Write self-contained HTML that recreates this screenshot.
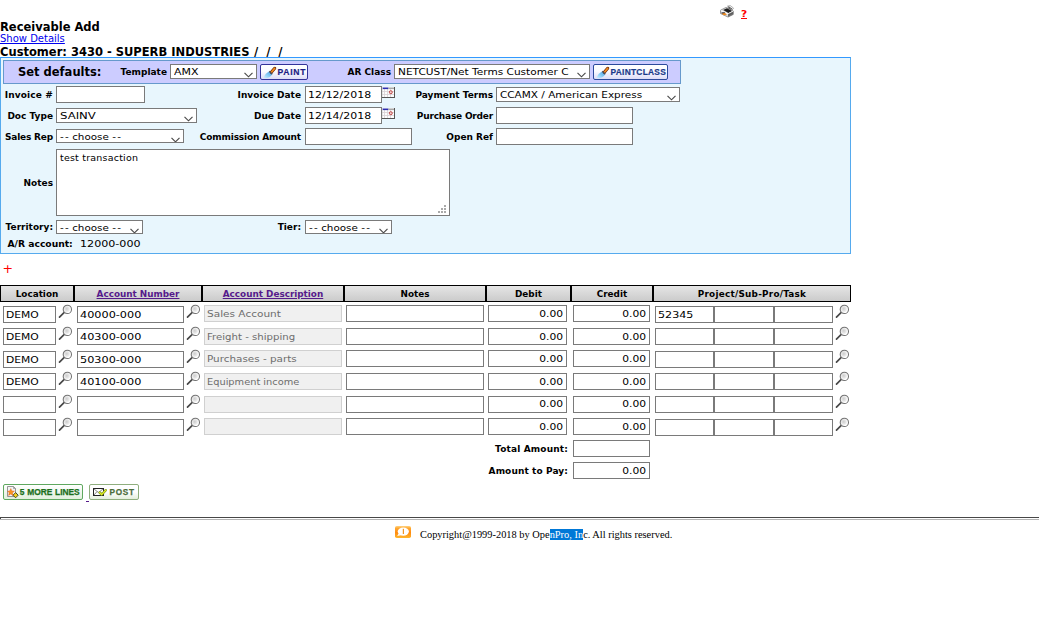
<!DOCTYPE html>
<html><head><meta charset="utf-8"><title>Receivable Add</title>
<style>
html,body{margin:0;padding:0;background:#fff;}
body{width:1039px;height:621px;position:relative;overflow:hidden;font-family:"DejaVu Sans","Liberation Sans",sans-serif;font-size:10px;color:#000;}
.a{position:absolute;white-space:nowrap;line-height:1;}
.b{font-weight:bold;}
.in{position:absolute;box-sizing:border-box;border:1px solid #7a7a7a;background:#fff;height:17px;font-size:9px;line-height:15px;padding:0 2px;white-space:nowrap;overflow:hidden;}
.sel{position:absolute;box-sizing:border-box;border:1px solid #7a7a7a;background:#fff;height:15px;font-size:9px;line-height:13px;padding:0 3px;white-space:nowrap;overflow:hidden;}
.sel svg{position:absolute;right:3px;bottom:0px;}
.t{display:inline-block;position:relative;top:.7px;transform:scaleX(1.18);transform-origin:0 50%;}
.t.d{transform:scaleX(1.24);}
.r .t{transform-origin:100% 50%;}
.ro{background:#f0f0f0;border-color:#d0d0d0;color:#6d6d6d;}
.r{text-align:right;padding-right:3px;}
.th{position:absolute;box-sizing:border-box;border:1px solid #000;height:17px;top:285px;background:linear-gradient(#e5e5e5,#cbcbcb);text-align:center;font-weight:bold;font-size:8.85px;line-height:16px;}
.th span{color:#551a8b;text-decoration:underline;}
.lbl{position:absolute;white-space:nowrap;font-weight:bold;font-size:9px;line-height:12px;text-align:right;}
.btn{position:absolute;white-space:nowrap;box-sizing:border-box;height:16px;border:1px solid #333399;border-radius:2px;background:linear-gradient(#fff,#fbfbff 45%,#dcdcf6);-webkit-text-stroke:.2px;font-family:"Liberation Sans",sans-serif;font-weight:bold;font-size:9px;line-height:14px;color:#1c1c84;}
.gbtn{position:absolute;white-space:nowrap;-webkit-text-stroke:.25px;box-sizing:border-box;height:17px;border:1px solid #8fbf7f;border-radius:2px;background:linear-gradient(#fff,#e2f0dc);font-family:"Liberation Sans",sans-serif;font-weight:bold;font-size:9px;line-height:15px;color:#1a6e1a;}
.mag{position:absolute;}
</style></head><body>
<svg width="0" height="0" style="position:absolute"><defs><radialGradient id="mg" cx="42%" cy="42%" r="60%"><stop offset="0" stop-color="#cdcdcd"/><stop offset="0.45" stop-color="#e6e6e6"/><stop offset="0.8" stop-color="#ffffff"/></radialGradient></defs></svg>

<div class="a b" style="left:741px;top:9.6px;font-size:9px;color:#f00;"><span style="display:inline-block;transform:scaleX(1.18);transform-origin:0 0;">?</span></div><div class="a" style="left:741px;top:18px;width:6px;height:1px;background:#f00;"></div>
<div class="a b" style="left:0;top:22px;font-size:11.5px;">Receivable Add</div>
<div class="a" style="left:0;top:34px;font-size:10px;color:#0000ee;text-decoration:underline;">Show Details</div>
<div class="a b" style="left:0;top:46.5px;font-size:11.5px;">Customer: 3430 - SUPERB INDUSTRIES<span style="letter-spacing:2px;margin-left:-1.5px;"> / / /</span></div>
<svg class="mag" style="left:719.3px;top:4.6px;" width="16" height="13" viewBox="0 0 17 14"><path d="M9 1.2 L12 0.6 L15.6 3.4 L13.4 5.6 Z" fill="#f4f4f4" stroke="#777" stroke-width="0.6"/><path d="M10.2 1.8 L14.2 4.6 M9.4 2.8 L13 5.2" stroke="#222" stroke-width="0.9"/><path d="M1.5 5.6 L7.5 2.6 L15.2 6.4 L15.2 10.2 L9.6 13 L1.5 9.2 Z" fill="#dcdcdc" stroke="#6a6a6a" stroke-width="0.7"/><path d="M4.4 5.4 L8.4 3.4 L14 6.4 L10 8.6 Z" fill="#1c1c1c"/><path d="M1.8 6 L9.6 9.6 L15 6.8" fill="none" stroke="#fff" stroke-width="1"/><path d="M9.6 9.8 L15.2 7 L15.2 10.2 L9.6 13 Z" fill="#6e6e6e"/><path d="M9.8 11 L15 8.4" stroke="#555" stroke-width="0.8"/><path d="M2.6 9 L6.2 8.4 L8.4 10.6 L4.8 11 Z" fill="#f08a1c"/><path d="M2.4 8.2 L5.8 7.8 L6.6 8.6 L2.8 9.2 Z" fill="#223"/></svg>
<div class="a" style="left:0;top:57px;width:851px;height:197px;box-sizing:border-box;border:1px solid #55aaee;border-top-color:#3399ff;background:#e8f6fd;"></div>
<div class="a" style="left:3px;top:60px;width:678px;height:24px;box-sizing:border-box;border:1px solid #6699cc;background:#ccccff;"></div>
<div class="a b" style="left:18px;top:67px;font-size:11.5px;">Set defaults:</div>
<div class="lbl" style="left:27px;width:140px;top:66px;">Template</div>
<div class="sel" style="left:170px;top:64px;width:87px;height:15px;"><span class="t" style="transform:scaleX(1.218)">AMX</span><svg width="9" height="6" viewBox="0 0 9 6"><path d="M0.5 0.8 L4.5 4.8 L8.5 0.8" fill="none" stroke="#484848" stroke-width="1.15"/></svg></div>
<div class="btn" style="left:260px;top:64px;width:48px;"><span style="position:absolute;left:16.4px;font-size:8.6px;letter-spacing:0.75px;">PAINT</span></div>
<svg class="mag" style="left:262.5px;top:65.5px;" width="15" height="14" viewBox="0 0 15 14"><defs><linearGradient id="bg262" x1="1" y1="0" x2="0" y2="1"><stop offset="0" stop-color="#3f9fe6"/><stop offset="0.55" stop-color="#8ccdf4"/><stop offset="1" stop-color="#d4f0fd"/></linearGradient></defs><path d="M0.6 12.1 C1.4 9 3.4 6.8 6.1 5.5 L9.1 8.5 C7.8 11 4.6 12.4 0.6 12.1 Z" fill="url(#bg262)"/><path d="M8.3 6.3 L11.7 2.3" stroke="#6e2c12" stroke-width="3.1" stroke-linecap="round"/><path d="M8.4 6.2 L11.6 2.4" stroke="#f58a1c" stroke-width="1.7" stroke-linecap="round"/><path d="M6.3 5.3 L9.3 8.3" stroke="#4a4a55" stroke-width="1.3"/></svg>
<div class="lbl" style="left:251px;width:140px;top:66px;">AR Class</div>
<div class="sel" style="left:394px;top:64px;width:196px;height:15px;"><span class="t" style="transform:scaleX(1.173)">NETCUST/Net Terms Customer C</span><svg width="9" height="6" viewBox="0 0 9 6"><path d="M0.5 0.8 L4.5 4.8 L8.5 0.8" fill="none" stroke="#484848" stroke-width="1.15"/></svg></div>
<div class="btn" style="left:593px;top:64px;width:75px;border-color:#2c4a9c;color:#1a3a8a;"><span style="position:absolute;left:16.6px;font-size:8.4px;letter-spacing:0.25px;">PAINTCLASS</span></div>
<svg class="mag" style="left:595.5px;top:65.5px;" width="15" height="14" viewBox="0 0 15 14"><defs><linearGradient id="bg595" x1="1" y1="0" x2="0" y2="1"><stop offset="0" stop-color="#3f9fe6"/><stop offset="0.55" stop-color="#8ccdf4"/><stop offset="1" stop-color="#d4f0fd"/></linearGradient></defs><path d="M0.6 12.1 C1.4 9 3.4 6.8 6.1 5.5 L9.1 8.5 C7.8 11 4.6 12.4 0.6 12.1 Z" fill="url(#bg595)"/><path d="M8.3 6.3 L11.7 2.3" stroke="#6e2c12" stroke-width="3.1" stroke-linecap="round"/><path d="M8.4 6.2 L11.6 2.4" stroke="#f58a1c" stroke-width="1.7" stroke-linecap="round"/><path d="M6.3 5.3 L9.3 8.3" stroke="#4a4a55" stroke-width="1.3"/></svg>
<div class="lbl" style="left:-87px;width:140px;top:88.8px;"><span style="letter-spacing:.15px">Invoice #</span></div>
<div class="in " style="left:56px;top:86px;width:89px;height:17px;"></div>
<div class="lbl" style="left:161px;width:140px;top:88.8px;">Invoice Date</div>
<div class="in " style="left:305px;top:86px;width:77px;height:17px;"><span class="t" style="transform:scaleX(1.218)">12/12/2018</span></div>
<svg class="mag" style="left:382px;top:87px;" width="13" height="11" viewBox="0 0 13 11"><rect x="0" y="0" width="13" height="11" fill="#fdfdfd"/><path d="M2.5 2 V10 M5.5 2 V10 M8.5 2 V10 M0 4.5 H12 M0 7.5 H12" stroke="#d8d0d4" stroke-width="0.8"/><rect x="0.5" y="0.5" width="6" height="1.6" fill="#2c2cb0"/><rect x="6.5" y="0.5" width="6" height="1.6" fill="#a8a8a8"/><circle cx="8.8" cy="5.2" r="1.5" fill="#f0d0d0" stroke="#c04848" stroke-width="1"/><path d="M12.5 0 V11 M0 10.5 H13" stroke="#555" stroke-width="1"/><path d="M0.3 0 V10" stroke="#ccc" stroke-width="0.6"/></svg>
<div class="lbl" style="left:353px;width:140px;top:88.8px;">Payment Terms</div>
<div class="sel" style="left:496px;top:87px;width:184px;height:15px;"><span class="t" style="transform:scaleX(1.163)">CCAMX / American Express</span><svg width="9" height="6" viewBox="0 0 9 6"><path d="M0.5 0.8 L4.5 4.8 L8.5 0.8" fill="none" stroke="#484848" stroke-width="1.15"/></svg></div>
<div class="lbl" style="left:-87px;width:140px;top:109.8px;">Doc Type</div>
<div class="sel" style="left:56px;top:108px;width:141px;height:15px;"><span class="t" style="transform:scaleX(1.3)">SAINV</span><svg width="9" height="6" viewBox="0 0 9 6"><path d="M0.5 0.8 L4.5 4.8 L8.5 0.8" fill="none" stroke="#484848" stroke-width="1.15"/></svg></div>
<div class="lbl" style="left:161px;width:140px;top:109.8px;">Due Date</div>
<div class="in " style="left:305px;top:107px;width:77px;height:17px;"><span class="t" style="transform:scaleX(1.218)">12/14/2018</span></div>
<svg class="mag" style="left:382px;top:108px;" width="13" height="11" viewBox="0 0 13 11"><rect x="0" y="0" width="13" height="11" fill="#fdfdfd"/><path d="M2.5 2 V10 M5.5 2 V10 M8.5 2 V10 M0 4.5 H12 M0 7.5 H12" stroke="#d8d0d4" stroke-width="0.8"/><rect x="0.5" y="0.5" width="6" height="1.6" fill="#2c2cb0"/><rect x="6.5" y="0.5" width="6" height="1.6" fill="#a8a8a8"/><circle cx="8.8" cy="5.2" r="1.5" fill="#f0d0d0" stroke="#c04848" stroke-width="1"/><path d="M12.5 0 V11 M0 10.5 H13" stroke="#555" stroke-width="1"/><path d="M0.3 0 V10" stroke="#ccc" stroke-width="0.6"/></svg>
<div class="lbl" style="left:353px;width:140px;top:109.8px;"><span style="letter-spacing:-.2px">Purchase Order</span></div>
<div class="in " style="left:496px;top:107px;width:137px;height:17px;"></div>
<div class="lbl" style="left:-87px;width:140px;top:130.8px;"><span style="letter-spacing:-.2px">Sales Rep</span></div>
<div class="sel" style="left:56px;top:129px;width:128px;height:14px;line-height:12px;"><span class="t" style="transform:scaleX(1.15)"><span style="letter-spacing:1.2px">-</span>- choose <span style="letter-spacing:1.2px">-</span>-</span><svg style="bottom:-1px" width="9" height="6" viewBox="0 0 9 6"><path d="M0.5 0.8 L4.5 4.8 L8.5 0.8" fill="none" stroke="#484848" stroke-width="1.15"/></svg></div>
<div class="lbl" style="left:161px;width:140px;top:130.8px;"><span style="letter-spacing:-.15px">Commission Amount</span></div>
<div class="in " style="left:305px;top:128px;width:107px;height:17px;"></div>
<div class="lbl" style="left:353px;width:140px;top:130.8px;">Open Ref</div>
<div class="in " style="left:496px;top:128px;width:137px;height:17px;"></div>
<div class="lbl" style="left:-87px;width:140px;top:176.8px;">Notes</div>
<div class="in" style="left:56px;top:149px;width:394px;height:67px;font-size:9.5px;letter-spacing:.2px;line-height:12px;padding:2px 3px;">test transaction</div>
<svg class="mag" style="left:438px;top:205px;" width="8" height="8" viewBox="0 0 8 8" shape-rendering="crispEdges"><g fill="#aaaaaa"><rect x="6" y="0" width="2" height="2"/><rect x="3" y="3" width="2" height="2"/><rect x="6" y="3" width="2" height="2"/><rect x="0" y="6" width="2" height="2"/><rect x="3" y="6" width="2" height="2"/><rect x="6" y="6" width="2" height="2"/></g></svg>
<div class="lbl" style="left:-87px;width:140px;top:221px;">Territory:</div>
<div class="sel" style="left:56px;top:220px;width:87px;height:14px;line-height:12px;"><span class="t" style="transform:scaleX(1.15)"><span style="letter-spacing:1.2px">-</span>- choose <span style="letter-spacing:1.2px">-</span>-</span><svg style="bottom:-1px" width="9" height="6" viewBox="0 0 9 6"><path d="M0.5 0.8 L4.5 4.8 L8.5 0.8" fill="none" stroke="#484848" stroke-width="1.15"/></svg></div>
<div class="lbl" style="left:161px;width:140px;top:221px;">Tier:</div>
<div class="sel" style="left:305px;top:220px;width:87px;height:14px;line-height:12px;"><span class="t" style="transform:scaleX(1.15)"><span style="letter-spacing:1.2px">-</span>- choose <span style="letter-spacing:1.2px">-</span>-</span><svg style="bottom:-1px" width="9" height="6" viewBox="0 0 9 6"><path d="M0.5 0.8 L4.5 4.8 L8.5 0.8" fill="none" stroke="#484848" stroke-width="1.15"/></svg></div>
<div class="a b" style="left:7.5px;top:238.6px;font-size:9.2px;">A/R account:</div>
<div class="a" style="left:80px;top:239.7px;font-size:9px;"><span class="t" style="top:0;transform:scaleX(1.235)">12000-000</span></div>
<div class="a" style="left:2.5px;top:262.6px;font-size:12.5px;color:#f00;">+</div>
<div class="th" style="left:0px;width:74px;">Location</div>
<div class="th" style="left:74px;width:128px;"><span>Account Number</span></div>
<div class="th" style="left:202px;width:142px;"><span>Account Description</span></div>
<div class="th" style="left:344px;width:142px;">Notes</div>
<div class="th" style="left:486px;width:85px;">Debit</div>
<div class="th" style="left:571px;width:82px;">Credit</div>
<div class="th" style="left:653px;width:198px;"><b style="letter-spacing:.25px">Project/Sub-Pro/Task</b></div>
<div class="in " style="left:3px;top:306px;width:53px;height:17px;"><span class="t" style="transform:scaleX(1.19)">DEMO</span></div>
<svg class="mag" style="left:56px;top:302px;" width="20" height="20" viewBox="0 0 20 20"><line x1="3.5" y1="15.1" x2="8.3" y2="10.3" stroke="#484848" stroke-width="1.7" stroke-linecap="round"/><circle cx="11.35" cy="7.4" r="4.15" fill="url(#mg)" stroke="#727272" stroke-width="1.05"/></svg>
<div class="in " style="left:77px;top:306px;width:107px;height:17px;"><span class="t" style="transform:scaleX(1.25)">40000-000</span></div>
<svg class="mag" style="left:184px;top:302px;" width="20" height="20" viewBox="0 0 20 20"><line x1="3.5" y1="15.1" x2="8.3" y2="10.3" stroke="#484848" stroke-width="1.7" stroke-linecap="round"/><circle cx="11.35" cy="7.4" r="4.15" fill="url(#mg)" stroke="#727272" stroke-width="1.05"/></svg>
<div class="in ro" style="left:204px;top:305px;width:138px;height:17px;"><span class="t" style="transform:scaleX(1.17)">Sales Account</span></div>
<div class="in " style="left:346px;top:305px;width:138px;height:17px;"></div>
<div class="in r" style="left:488px;top:305px;width:79px;height:17px;"><span class="t" style="transform:scaleX(1.19)">0.00</span></div>
<div class="in r" style="left:573px;top:305px;width:77px;height:17px;"><span class="t" style="transform:scaleX(1.19)">0.00</span></div>
<div class="in " style="left:655px;top:306px;width:59px;height:17px;"><span class="t" style="transform:scaleX(1.235)">52345</span></div>
<div class="in " style="left:714px;top:306px;width:60px;height:17px;"></div>
<div class="in " style="left:774px;top:306px;width:59px;height:17px;"></div>
<svg class="mag" style="left:833px;top:302px;" width="20" height="20" viewBox="0 0 20 20"><line x1="3.5" y1="15.1" x2="8.3" y2="10.3" stroke="#484848" stroke-width="1.7" stroke-linecap="round"/><circle cx="11.35" cy="7.4" r="4.15" fill="url(#mg)" stroke="#727272" stroke-width="1.05"/></svg>
<div class="in " style="left:3px;top:328px;width:53px;height:17px;"><span class="t" style="transform:scaleX(1.19)">DEMO</span></div>
<svg class="mag" style="left:56px;top:324px;" width="20" height="20" viewBox="0 0 20 20"><line x1="3.5" y1="15.1" x2="8.3" y2="10.3" stroke="#484848" stroke-width="1.7" stroke-linecap="round"/><circle cx="11.35" cy="7.4" r="4.15" fill="url(#mg)" stroke="#727272" stroke-width="1.05"/></svg>
<div class="in " style="left:77px;top:328px;width:107px;height:17px;"><span class="t" style="transform:scaleX(1.25)">40300-000</span></div>
<svg class="mag" style="left:184px;top:324px;" width="20" height="20" viewBox="0 0 20 20"><line x1="3.5" y1="15.1" x2="8.3" y2="10.3" stroke="#484848" stroke-width="1.7" stroke-linecap="round"/><circle cx="11.35" cy="7.4" r="4.15" fill="url(#mg)" stroke="#727272" stroke-width="1.05"/></svg>
<div class="in ro" style="left:204px;top:328px;width:138px;height:17px;"><span class="t" style="transform:scaleX(1.127)">Freight - shipping</span></div>
<div class="in " style="left:346px;top:328px;width:138px;height:17px;"></div>
<div class="in r" style="left:488px;top:328px;width:79px;height:17px;"><span class="t" style="transform:scaleX(1.19)">0.00</span></div>
<div class="in r" style="left:573px;top:328px;width:77px;height:17px;"><span class="t" style="transform:scaleX(1.19)">0.00</span></div>
<div class="in " style="left:655px;top:328px;width:59px;height:17px;"></div>
<div class="in " style="left:714px;top:328px;width:60px;height:17px;"></div>
<div class="in " style="left:774px;top:328px;width:59px;height:17px;"></div>
<svg class="mag" style="left:833px;top:324px;" width="20" height="20" viewBox="0 0 20 20"><line x1="3.5" y1="15.1" x2="8.3" y2="10.3" stroke="#484848" stroke-width="1.7" stroke-linecap="round"/><circle cx="11.35" cy="7.4" r="4.15" fill="url(#mg)" stroke="#727272" stroke-width="1.05"/></svg>
<div class="in " style="left:3px;top:351px;width:53px;height:17px;"><span class="t" style="transform:scaleX(1.19)">DEMO</span></div>
<svg class="mag" style="left:56px;top:347px;" width="20" height="20" viewBox="0 0 20 20"><line x1="3.5" y1="15.1" x2="8.3" y2="10.3" stroke="#484848" stroke-width="1.7" stroke-linecap="round"/><circle cx="11.35" cy="7.4" r="4.15" fill="url(#mg)" stroke="#727272" stroke-width="1.05"/></svg>
<div class="in " style="left:77px;top:351px;width:107px;height:17px;"><span class="t" style="transform:scaleX(1.25)">50300-000</span></div>
<svg class="mag" style="left:184px;top:347px;" width="20" height="20" viewBox="0 0 20 20"><line x1="3.5" y1="15.1" x2="8.3" y2="10.3" stroke="#484848" stroke-width="1.7" stroke-linecap="round"/><circle cx="11.35" cy="7.4" r="4.15" fill="url(#mg)" stroke="#727272" stroke-width="1.05"/></svg>
<div class="in ro" style="left:204px;top:350px;width:138px;height:17px;"><span class="t" style="transform:scaleX(1.155)">Purchases - parts</span></div>
<div class="in " style="left:346px;top:350px;width:138px;height:17px;"></div>
<div class="in r" style="left:488px;top:350px;width:79px;height:17px;"><span class="t" style="transform:scaleX(1.19)">0.00</span></div>
<div class="in r" style="left:573px;top:350px;width:77px;height:17px;"><span class="t" style="transform:scaleX(1.19)">0.00</span></div>
<div class="in " style="left:655px;top:351px;width:59px;height:17px;"></div>
<div class="in " style="left:714px;top:351px;width:60px;height:17px;"></div>
<div class="in " style="left:774px;top:351px;width:59px;height:17px;"></div>
<svg class="mag" style="left:833px;top:347px;" width="20" height="20" viewBox="0 0 20 20"><line x1="3.5" y1="15.1" x2="8.3" y2="10.3" stroke="#484848" stroke-width="1.7" stroke-linecap="round"/><circle cx="11.35" cy="7.4" r="4.15" fill="url(#mg)" stroke="#727272" stroke-width="1.05"/></svg>
<div class="in " style="left:3px;top:373px;width:53px;height:17px;"><span class="t" style="transform:scaleX(1.19)">DEMO</span></div>
<svg class="mag" style="left:56px;top:369px;" width="20" height="20" viewBox="0 0 20 20"><line x1="3.5" y1="15.1" x2="8.3" y2="10.3" stroke="#484848" stroke-width="1.7" stroke-linecap="round"/><circle cx="11.35" cy="7.4" r="4.15" fill="url(#mg)" stroke="#727272" stroke-width="1.05"/></svg>
<div class="in " style="left:77px;top:373px;width:107px;height:17px;"><span class="t" style="transform:scaleX(1.25)">40100-000</span></div>
<svg class="mag" style="left:184px;top:369px;" width="20" height="20" viewBox="0 0 20 20"><line x1="3.5" y1="15.1" x2="8.3" y2="10.3" stroke="#484848" stroke-width="1.7" stroke-linecap="round"/><circle cx="11.35" cy="7.4" r="4.15" fill="url(#mg)" stroke="#727272" stroke-width="1.05"/></svg>
<div class="in ro" style="left:204px;top:373px;width:138px;height:17px;"><span class="t" style="transform:scaleX(1.09)">Equipment income</span></div>
<div class="in " style="left:346px;top:373px;width:138px;height:17px;"></div>
<div class="in r" style="left:488px;top:373px;width:79px;height:17px;"><span class="t" style="transform:scaleX(1.19)">0.00</span></div>
<div class="in r" style="left:573px;top:373px;width:77px;height:17px;"><span class="t" style="transform:scaleX(1.19)">0.00</span></div>
<div class="in " style="left:655px;top:373px;width:59px;height:17px;"></div>
<div class="in " style="left:714px;top:373px;width:60px;height:17px;"></div>
<div class="in " style="left:774px;top:373px;width:59px;height:17px;"></div>
<svg class="mag" style="left:833px;top:369px;" width="20" height="20" viewBox="0 0 20 20"><line x1="3.5" y1="15.1" x2="8.3" y2="10.3" stroke="#484848" stroke-width="1.7" stroke-linecap="round"/><circle cx="11.35" cy="7.4" r="4.15" fill="url(#mg)" stroke="#727272" stroke-width="1.05"/></svg>
<div class="in " style="left:3px;top:396px;width:53px;height:17px;"></div>
<svg class="mag" style="left:56px;top:392px;" width="20" height="20" viewBox="0 0 20 20"><line x1="3.5" y1="15.1" x2="8.3" y2="10.3" stroke="#484848" stroke-width="1.7" stroke-linecap="round"/><circle cx="11.35" cy="7.4" r="4.15" fill="url(#mg)" stroke="#727272" stroke-width="1.05"/></svg>
<div class="in " style="left:77px;top:396px;width:107px;height:17px;"></div>
<svg class="mag" style="left:184px;top:392px;" width="20" height="20" viewBox="0 0 20 20"><line x1="3.5" y1="15.1" x2="8.3" y2="10.3" stroke="#484848" stroke-width="1.7" stroke-linecap="round"/><circle cx="11.35" cy="7.4" r="4.15" fill="url(#mg)" stroke="#727272" stroke-width="1.05"/></svg>
<div class="in ro" style="left:204px;top:395.5px;width:138px;height:17px;"></div>
<div class="in " style="left:346px;top:395.5px;width:138px;height:17px;"></div>
<div class="in r" style="left:488px;top:395.5px;width:79px;height:17px;"><span class="t" style="transform:scaleX(1.19)">0.00</span></div>
<div class="in r" style="left:573px;top:395.5px;width:77px;height:17px;"><span class="t" style="transform:scaleX(1.19)">0.00</span></div>
<div class="in " style="left:655px;top:396px;width:59px;height:17px;"></div>
<div class="in " style="left:714px;top:396px;width:60px;height:17px;"></div>
<div class="in " style="left:774px;top:396px;width:59px;height:17px;"></div>
<svg class="mag" style="left:833px;top:392px;" width="20" height="20" viewBox="0 0 20 20"><line x1="3.5" y1="15.1" x2="8.3" y2="10.3" stroke="#484848" stroke-width="1.7" stroke-linecap="round"/><circle cx="11.35" cy="7.4" r="4.15" fill="url(#mg)" stroke="#727272" stroke-width="1.05"/></svg>
<div class="in " style="left:3px;top:419px;width:53px;height:17px;"></div>
<svg class="mag" style="left:56px;top:415px;" width="20" height="20" viewBox="0 0 20 20"><line x1="3.5" y1="15.1" x2="8.3" y2="10.3" stroke="#484848" stroke-width="1.7" stroke-linecap="round"/><circle cx="11.35" cy="7.4" r="4.15" fill="url(#mg)" stroke="#727272" stroke-width="1.05"/></svg>
<div class="in " style="left:77px;top:419px;width:107px;height:17px;"></div>
<svg class="mag" style="left:184px;top:415px;" width="20" height="20" viewBox="0 0 20 20"><line x1="3.5" y1="15.1" x2="8.3" y2="10.3" stroke="#484848" stroke-width="1.7" stroke-linecap="round"/><circle cx="11.35" cy="7.4" r="4.15" fill="url(#mg)" stroke="#727272" stroke-width="1.05"/></svg>
<div class="in ro" style="left:204px;top:418px;width:138px;height:17px;"></div>
<div class="in " style="left:346px;top:418px;width:138px;height:17px;"></div>
<div class="in r" style="left:488px;top:418px;width:79px;height:17px;"><span class="t" style="transform:scaleX(1.19)">0.00</span></div>
<div class="in r" style="left:573px;top:418px;width:77px;height:17px;"><span class="t" style="transform:scaleX(1.19)">0.00</span></div>
<div class="in " style="left:655px;top:419px;width:59px;height:17px;"></div>
<div class="in " style="left:714px;top:419px;width:60px;height:17px;"></div>
<div class="in " style="left:774px;top:419px;width:59px;height:17px;"></div>
<svg class="mag" style="left:833px;top:415px;" width="20" height="20" viewBox="0 0 20 20"><line x1="3.5" y1="15.1" x2="8.3" y2="10.3" stroke="#484848" stroke-width="1.7" stroke-linecap="round"/><circle cx="11.35" cy="7.4" r="4.15" fill="url(#mg)" stroke="#727272" stroke-width="1.05"/></svg>
<div class="lbl" style="left:428px;width:140px;top:443px;"><span style="letter-spacing:.15px">Total Amount:</span></div>
<div class="in " style="left:573px;top:440px;width:77px;height:17px;"></div>
<div class="lbl" style="left:428px;width:140px;top:465px;"><span style="letter-spacing:.1px">Amount to Pay:</span></div>
<div class="in r" style="left:573px;top:462px;width:77px;height:17px;"><span class="t" style="transform:scaleX(1.19)">0.00</span></div>
<div class="gbtn" style="left:3px;top:484px;width:80px;height:16px;border-color:#5fa85f;"><span style="position:absolute;left:15.8px;top:0;font-size:8.4px;line-height:14px;letter-spacing:0;word-spacing:.4px;">5 MORE LINES</span></div>
<svg class="mag" style="left:6px;top:485px;" width="14" height="14" viewBox="0 0 14 14"><path d="M1.5 1.5 H7.5 L9.5 3.5 V11.5 H1.5 Z" fill="#f4f4f4" stroke="#8a8a8a" stroke-width="0.9"/><path d="M7.5 1.5 V3.5 H9.5" fill="none" stroke="#8a8a8a" stroke-width="0.7"/><path d="M4.8 3.6 L5.8 6 L8.4 6.2 L6.4 7.8 L7 10.4 L4.8 9 L2.6 10.4 L3.2 7.8 L1.6 6.2 L3.8 6 Z" fill="#f7941d" stroke="#e8601c" stroke-width="0.5"/><path d="M9.6 7.6 L12.2 10.2 L9.6 12.8 L7 10.2 Z" fill="#f2d21c" stroke="#3a3420" stroke-width="0.9" stroke-linejoin="round"/></svg>
<div class="gbtn" style="left:89px;top:484px;width:50px;height:16px;border-color:#8fae7e;background:linear-gradient(#fff,#fff 50%,#e4eedd);color:#4a6c3a;"><span style="position:absolute;left:19.5px;top:.5px;font-size:8.2px;line-height:14px;letter-spacing:.75px;">POST</span></div>
<svg class="mag" style="left:92px;top:487px;" width="16" height="10" viewBox="0 0 16 10"><rect x="1.5" y="1.5" width="10" height="7" fill="#fff" stroke="#222" stroke-width="1"/><path d="M1.8 1.8 L6.5 5.6 L11.2 1.8 M1.8 8.2 L5 4.6 M11.2 8.2 L8 4.6" fill="none" stroke="#555" stroke-width="0.7"/><path d="M7.6 5.4 L9.6 7.6 L13.8 3.2" fill="none" stroke="#7a9a20" stroke-width="2.4" stroke-linecap="round" stroke-linejoin="round"/><path d="M7.6 5.4 L9.6 7.6 L13.8 3.2" fill="none" stroke="#e6ee20" stroke-width="1.2" stroke-linecap="round" stroke-linejoin="round"/></svg>
<div class="a" style="left:86px;top:501px;width:3px;height:1px;background:#551a8b;"></div>
<div class="a" style="left:0;top:517px;width:1039px;height:1px;background:#484848;"></div>
<div class="a" style="left:0;top:518px;width:1px;height:1px;background:#484848;"></div>
<div class="a" style="left:0;top:519px;width:1039px;height:1px;background:#b4b4b4;"></div>
<div class="a" style="left:420px;top:530px;font-family:'Liberation Serif',serif;font-size:10.4px;">Copyright@1999-2018 by Ope<span style="background:#0078d7;color:#fff;">nPro, In</span>c. All rights reserved.</div>
<svg class="mag" style="left:395px;top:526px;" width="16" height="12" viewBox="0 0 16 12"><defs><linearGradient id="og" x1="0" y1="0" x2="0" y2="1"><stop offset="0" stop-color="#ffd484"/><stop offset="0.18" stop-color="#ffa830"/><stop offset="0.55" stop-color="#ff8a10"/><stop offset="1" stop-color="#ffb62c"/></linearGradient></defs><rect x="0" y="0" width="16" height="12" rx="1.8" fill="url(#og)"/><ellipse cx="8.3" cy="5.6" rx="5.6" ry="4.2" fill="#fff"/><path d="M3.6 7.6 L2.2 10 L6 9.2 Z" fill="#fff"/><rect x="7.8" y="2.8" width="1.1" height="5.2" fill="#ee8a10"/></svg>
</body></html>
